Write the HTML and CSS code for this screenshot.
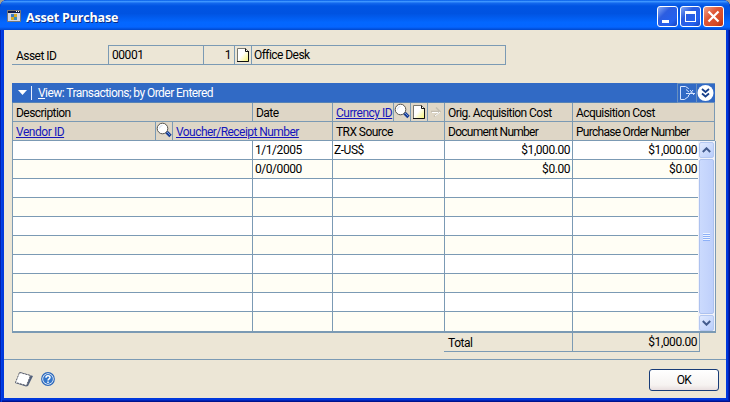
FILE: index.html
```html
<!DOCTYPE html>
<html lang="en">
<head>
<meta charset="utf-8">
<title>Asset Purchase</title>
<link rel="stylesheet" href="styles.css">
</head>
<body>
<svg width="0" height="0" class="defs" aria-hidden="true">
  <defs>
    <linearGradient id="pageFill" x1="0" y1="0" x2="1" y2="1"><stop offset=".45" stop-color="#fff"/><stop offset="1" stop-color="#f8f46c"/></linearGradient>
    <symbol id="lens" viewBox="0 0 16 16"><path d="M10.500 10l4 4" stroke="#173b94" stroke-width="3.400"/><path d="M11 10l3 3" stroke="#719bdd" stroke-width="1"/><circle cx="6.500" cy="6.500" r="5.300" fill="#fff" stroke="#55534f" stroke-width="1"/><path d="M3.500 6.500a3 3 0 0 1 3-3" fill="none" stroke="#d2dfef"/></symbol>
    <symbol id="page" viewBox="0 0 14 16"><path d="M1.500 1.500h8l3 3v10h-11z" fill="url(#pageFill)" stroke="#77766f"/><path d="M9.500 1.500v3h3M12.500 4v10.500H1" fill="none" stroke="#111"/></symbol>
  </defs>
</svg>
<main class="window">
  <header class="titlebar">
    <svg class="app" width="14" height="12" viewBox="0 0 14 12"><path fill="#d5d8e3" stroke="#777" d="M.5.5h13v11H.5z"/><path fill="#101b47" d="M1 1h12v2H1z"/><path fill="#fff" d="M9 1h1v1H9zM11 1h1v1h-1z"/><path fill="#3779c4" d="M4 4h3v3H4z"/><path fill="#d6aa23" d="M7 4h3v3H7zM4 7h3v3H4z"/><path fill="#3c8cb5" d="M7 7h3v3H7z"/></svg>
    <h1>Asset Purchase</h1>
    <div class="controls">
      <button aria-label="Minimize"><svg width="19" height="19"><path fill="#fff" d="M4 13h7v3H4z"/></svg></button>
      <button aria-label="Maximize"><svg width="19" height="19"><path fill="#fff" fill-rule="evenodd" d="M4 4h11v11H4zM5 7v7h9V7z"/></svg></button>
      <button class="close" aria-label="Close"><svg width="19" height="19"><path stroke="#fff" stroke-width="2.200" d="M4.500 4.500l10 10m0-10l-10 10"/></svg></button>
    </div>
  </header>
  <div class="client">
    <section class="asset">
      <div class="label">Asset ID</div>
      <div class="field id">00001</div><div class="field suffix">1</div>
      <div class="field note"><svg width="14" height="16"><use href="#page"/></svg></div>
      <div class="field desk">Office Desk</div>
    </section>
    <section class="list">
      <div class="view">
        <svg width="9" height="5"><path d="M0 0h9L4.500 5z" fill="#fff"/></svg><i></i><span><u>V</u>iew: Transactions; by Order Entered</span>
        <div class="tools">
          <b><svg width="17" height="18" fill="none" stroke="#d5e4ff"><path d="M9.500 5V4.500L6.500 2.500h-5v13h4l4-3V11M7 5.500L10 8M7 9.500h9M10 11l4-5M11 6l4 5"/></svg></b>
          <b><svg width="17" height="18"><circle cx="8.500" cy="9" r="8" fill="#fff"/><path d="M5 5l3.500 3L12 5M5 9.500l3.500 3 3.500-3" fill="none" stroke="#18408b" stroke-width="1.800"/></svg></b>
        </div>
      </div>
      <div class="head">
        <div class="w240">Description</div><div class="w80">Date</div>
        <div class="w112 currency"><a>Currency ID</a><b><svg width="16" height="16"><use href="#lens"/></svg></b><b><svg width="14" height="16"><use href="#page"/></svg></b><b><svg width="14" height="16" fill="none" stroke="#c3bdb0"><path d="M2 7.500h9M7 3.500l4 4-6 5" stroke-width="1.500"/><path d="M3 8.500h6M6 12l5-4" stroke="#fff"/></svg></b></div>
        <div class="w128">Orig. Acquisition Cost</div><div class="rest">Acquisition Cost</div>
      </div>
      <div class="head">
        <div class="vendor"><a>Vendor ID</a></div><div class="find"><svg width="16" height="16"><use href="#lens"/></svg></div><div class="voucher"><a>Voucher/Receipt Number</a></div>
        <div class="w112">TRX Source</div><div class="w128 tight">Document Number</div><div class="rest tight">Purchase Order Number</div>
      </div>
      <div class="body">
        <div class="rows">
          <div class="row"><span></span><span>1/1/2005</span><span>Z-US$</span><span>$1,000.00</span><span>$1,000.00</span></div>
          <div class="row"><span></span><span>0/0/0000</span><span></span><span>$0.00</span><span>$0.00</span></div>
          <div class="row"><span></span><span></span><span></span><span></span><span></span></div>
          <div class="row"><span></span><span></span><span></span><span></span><span></span></div>
          <div class="row"><span></span><span></span><span></span><span></span><span></span></div>
          <div class="row"><span></span><span></span><span></span><span></span><span></span></div>
          <div class="row"><span></span><span></span><span></span><span></span><span></span></div>
          <div class="row"><span></span><span></span><span></span><span></span><span></span></div>
          <div class="row"><span></span><span></span><span></span><span></span><span></span></div>
          <div class="row"><span></span><span></span><span></span><span></span><span></span></div>
        </div>
        <div class="scroll">
          <div class="arrow"><svg width="9" height="6"><path d="M.8 5l3.700-3.700L8.200 5" fill="none" stroke="#435b8d" stroke-width="2"/></svg></div>
          <div class="thumb"><em></em></div>
          <div class="arrow"><svg width="9" height="6"><path d="M.8 1l3.700 3.700L8.200 1" fill="none" stroke="#435b8d" stroke-width="2"/></svg></div>
        </div>
      </div>
    </section>
    <div class="total"><span>Total</span><span>$1,000.00</span></div>
    <footer>
      <svg width="20" height="16"><path d="M6 1l13 4-5 10-2 .5L1 12z" fill="#52617d"/><path d="M5.500 1.500l11 3-4 10-11-3z" fill="#fff" stroke="#60626b" stroke-dasharray="2 1"/></svg>
      <svg class="help" width="14" height="14"><circle cx="7" cy="7" r="6.300" fill="#fff" stroke="#2864b8" stroke-width="1.200"/><circle cx="7" cy="7" r="4.900" fill="#3476ca"/><path d="M5 5.700c0-2.500 4-2.500 4-.3C9 7 7.200 6.700 7 8.500M7 9.500V11" fill="none" stroke="#fff" stroke-width="1.500"/></svg>
      <button class="ok">OK</button>
    </footer>
  </div>
</main>
</body>
</html>
```
FILE: styles.css
```css
* { box-sizing: border-box; }
body { margin: 0; background: #a5a18f; font: 12px/18px Roboto, sans-serif; letter-spacing: -.55px; color: #000; }
.defs { position: absolute; }
svg { display: block; flex: none; }
button { padding: 0; font: inherit; letter-spacing: inherit; }
.window { width: 730px; height: 402px; padding: 0 4px 4px; border-radius: 7px 7px 0 0; overflow: hidden; background: #0038dc; box-shadow: inset 1px 0 #001fae, inset 2px 0 #0040e8, inset -1px -1px #00128c, inset -2px -2px #0022b8; }
.titlebar { height: 30px; margin: 0 -4px; padding: 0 6px 0 7px; display: flex; align-items: center; background: linear-gradient(#0058e6 0, #3d95ff 5%, #1267ed 11%, #0054e3 20%, #0053e1 45%, #0367ff 75%, #0565ff 90%, #0047cc 100%); }
.app { margin-top: 2px; }
h1 { margin: 5px 0 0 5px; font: bold 12.5px/18px "Open Sans", sans-serif; letter-spacing: -.18px; color: #fff; text-shadow: 1px 1px #0a2d83; }
.controls { display: flex; gap: 2px; margin: 3px 0 0 auto; }
.controls button { width: 21px; height: 21px; border: 1px solid #fff; border-radius: 3px; background: linear-gradient(135deg, #86a9f4, #2c5de0 35%, #2461ef 75%, #1743c1); }
.controls .close { background: linear-gradient(135deg, #f0a28b, #df5737 40%, #d64a25 75%, #b72f11); }
.client { height: 368px; background: #ece6d6; padding: 15px 8px 0; }
.asset { display: flex; height: 20px; width: 494px; }
.asset > div { border-bottom: 1px solid #7b9ab4; }
.label { width: 96px; padding: 2px 0 0 4px; }
.field { border: 1px solid #7b9ab4; border-right: 0; line-height: 19px; padding-left: 3px; }
.id { width: 95px; letter-spacing: -.45px; }
.suffix { width: 31px; text-align: right; padding-right: 3px; }
.note { width: 17px; padding: 1px 0 0 1px; }
.desk { flex: 1; border-right: 1px solid #7b9ab4; padding-left: 2px; }
.list { margin-top: 18px; width: 703px; }
.view { display: flex; align-items: center; height: 20px; background: #316ac5; border-bottom: 1px solid #5582b6; padding-left: 6px; color: #fff; }
.view i { width: 1px; height: 14px; background: #e8f0ff; margin: 0 6px 0 4px; }
.tools { display: flex; margin-left: auto; }
.tools b { height: 20px; width: 19px; border: 1px solid #6990bf; border-width: 1px 0 1px 1px; padding-left: 1px; }
.tools b:last-child { padding-left: 0; }
.head { display: flex; height: 19px; background: #ded6c6; border-left: 1px solid #7b9ab4; }
.head > div { border-right: 1px solid #7b9ab4; border-bottom: 1px solid #7b9ab4; padding: 1px 0 0 3px; white-space: nowrap; height: 19px; }
.head .tight { letter-spacing: -.72px; }
a { color: #1515bb; text-decoration: underline; text-underline-offset: 1px; }
.head .w240 { width: 240px; } .head .w80 { width: 80px; }
.head .w112 { width: 112px; } .head .w128 { width: 128px; }
.head .rest { flex: 1; }
.head .currency { display: flex; }
.currency a { width: 57px; letter-spacing: -.48px; }
.currency b { width: 17px; height: 18px; border-left: 1px solid #7b9ab4; margin-top: -1px; padding: 1px 0 0 1px; }
.currency b:nth-child(2) { padding: 0; }
.head .vendor { width: 143px; letter-spacing: -.45px; } .head .find { width: 17px; padding: 0; } .head .voucher { width: 160px; }
.body { height: 192px; display: flex; border: 1px solid #7b9ab4; border-width: 0 1px 2px 1px; width: 704px; background: #fff; letter-spacing: -.45px; }
.rows { width: 685px; }
.row { display: grid; grid-template-columns: 240px 80px 112px 128px 125px; height: 19px; border-bottom: 1px solid #7b9ab4; }
.row:last-child { border: 0; }
.row:nth-child(even) { background: #fffef5; }
.row span { border-right: 1px solid #7b9ab4; padding-left: 2px; line-height: 18px; }
.row span:nth-child(3) { padding-left: 1px; }
.row span:nth-child(n+4) { text-align: right; padding-right: 2px; }
.row span:last-child { border: 0; padding-right: 1px; }
.scroll { width: 17px; display: flex; flex-direction: column; gap: 1px; padding: 1px 1px 0; background: #f2f3fa; }
.arrow { height: 16px; display: flex; align-items: center; justify-content: center; border: 1px solid #b4c8f1; border-radius: 2px; background: linear-gradient(135deg, #e1eafe, #b9cdfb); }
.thumb { flex: 1; display: flex; align-items: center; justify-content: center; border: 1px solid #adc2ef; border-radius: 2px; background: linear-gradient(90deg, #cbdafd, #bfd0fb); }
.thumb em { width: 7px; height: 8px; background: repeating-linear-gradient(#eef4fe 0 1px, #8cb0f8 1px 2px); }
.total { display: flex; width: 256px; height: 19px; margin-left: 432px; border-bottom: 1px solid #7b9ab4; line-height: 20px; letter-spacing: -.45px; }
.total span:first-child { width: 128px; padding-left: 4px; }
.total span:last-child { flex: 1; border: 1px solid #7b9ab4; border-width: 0 1px; text-align: right; padding-right: 2px; line-height: 18px; }
footer { display: flex; margin: 7px -8px 0; border-top: 1px solid #7b9ab4; height: 39px; padding: 0 7px 0 10px; align-items: center; }
.help { margin-left: 7px; }
.ok { margin-left: auto; margin-top: 2px; width: 70px; height: 22px; border: 1px solid #183c78; border-radius: 3px; background: linear-gradient(#fff, #f6f3f1 75%, #e9dfdf); color: #000; }
```
